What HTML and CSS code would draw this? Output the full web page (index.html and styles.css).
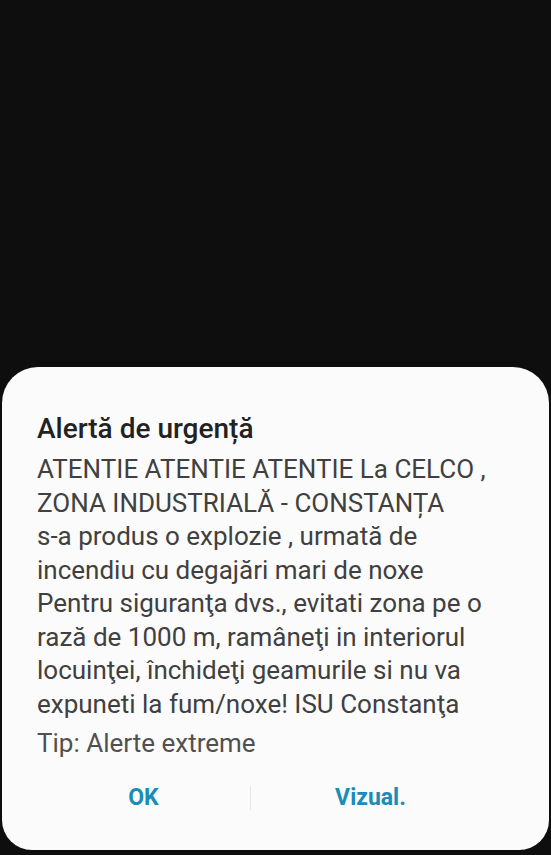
FILE: index.html
```html
<!DOCTYPE html>
<html lang="ro">
<head>
    <meta charset="UTF-8">
    <meta name="viewport" content="width=device-width, initial-scale=1.0">
    <title>Alertă de urgență</title>
    <link rel="stylesheet" href="styles.css">
</head>
<body>
    <div class="screen">
        <div class="dialog">
            <h1 class="title">Alertă de urgență</h1>
            <p class="message">ATENTIE ATENTIE ATENTIE La CELCO , ZONA INDUSTRIALĂ - CONSTANȚA<br>s-a produs o explozie , urmată de incendiu cu degajări mari de noxe<br>Pentru siguranţa dvs., evitati zona pe o rază de 1000 m, ramâneţi in interiorul locuinţei, închideţi geamurile si nu va expuneti la fum/noxe! ISU Constanţa</p>
            <p class="type">Tip: Alerte extreme</p>
            <div class="actions">
                <button class="action">OK</button>
                <span class="divider"></span>
                <button class="action">Vizual.</button>
            </div>
        </div>
    </div>
</body>
</html>
```

FILE: styles.css
```css
body {
    margin: 0;
    padding: 0;
    background: #0e0e0e;
    font-family: Roboto, "Noto Sans", sans-serif;
}

.screen {
    height: 855px;
    display: flex;
    flex-direction: column;
    justify-content: flex-end;
    padding-bottom: 5px;
    box-sizing: border-box;
}

.dialog {
    margin: 0 2px;
    height: 483px;
    background: #fbfbfb;
    border-radius: 36px 36px 30px 30px;
    padding: 45px 40px 0 35px;
    box-sizing: border-box;
}

.title {
    margin: 0;
    font-size: 28px;
    font-weight: 500;
    color: #222;
    line-height: 34px;
}

.message {
    margin: 7px 0 0;
    font-size: 26px;
    line-height: 33.5px;
    color: #404040;
}

.type {
    margin: 5px 0 0;
    font-size: 26px;
    line-height: 34px;
    color: #505050;
}

.actions {
    display: grid;
    grid-template-columns: 213px 1px 1fr;
    align-items: center;
    margin-top: 23px;
    padding-right: 19px;
}

.action {
    background: none;
    border: none;
    padding: 0;
    font-family: inherit;
    font-size: 23px;
    font-weight: bold;
    color: #1b8cb8;
    line-height: 30px;
}

.divider {
    height: 24px;
    background: #e6e6e6;
}
```
